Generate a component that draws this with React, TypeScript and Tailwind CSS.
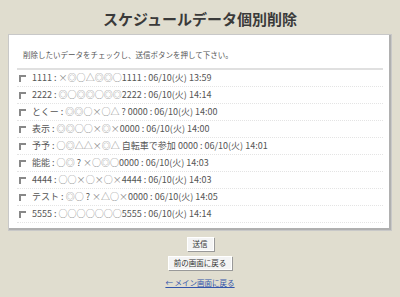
import React from "react";

const rows = [
  "1111 : ×◎○△◎◎○1111 : 06/10(火) 13:59",
  "2222 : ◎○◎◎○◎◎2222 : 06/10(火) 14:14",
  "とくー : ◎◎○×○△ ? 0000 : 06/10(火) 14:00",
  "表示 : ◎◎○○×◎×0000 : 06/10(火) 14:00",
  "予予 : ○◎△△×◎△ 自転車で参加 0000 : 06/10(火) 14:01",
  "能能 : ○◎ ? ×○◎○0000 : 06/10(火) 14:03",
  "4444 : ○○×○×○×4444 : 06/10(火) 14:03",
  "テスト : ◎○ ? ×△○×0000 : 06/10(火) 14:05",
  "5555 : ○○○○○○○5555 : 06/10(火) 14:14",
];

const SYM = "◎○△×";

function Row({ text }: { text: string }) {
  return (
    <span>
      {Array.from(text).map((c, i) =>
        SYM.includes(c) ? (
          <span key={i} className="text-[#8a8a8a]">
            {c}
          </span>
        ) : (
          <React.Fragment key={i}>{c}</React.Fragment>
        )
      )}
    </span>
  );
}

export default function App() {
  return (
    <div
      className="w-[400px] h-[297px] bg-[#e0ddcf] flex flex-col items-center overflow-hidden"
      style={{ fontFamily: '"Noto Sans CJK JP", "Noto Sans", sans-serif' }}
    >
      <h1 className="mt-[6px] h-[26px] text-[15px] leading-[26px] font-bold text-[#3a3a3a]">
        スケジュールデータ個別削除
      </h1>
      <div className="mt-[2px] w-[384px] h-[197px] bg-white border border-[#c8c8c8] shadow-[inset_-2px_-2px_0_#b0b0b0] px-[8px]">
        <p className="mt-[14px] pl-[6px] text-[7.5px] leading-[12px] text-[#555]">
          削除したいデータをチェックし、送信ボタンを押して下さい。
        </p>
        <div className="mt-[7px] border-t-2 border-[#e0e0e0] w-[366px]">
          {rows.map((r, i) => (
            <div
              key={i}
              className="h-[17px] flex items-center border-b border-dotted border-[#e4e4e4] pl-[2px] text-[9px] text-[#555] whitespace-nowrap"
            >
              <span className="w-[7px] h-[7px] border-l-2 border-t-2 border-[#888] mr-[6px] mt-[1px] shrink-0" />
              <Row text={r} />
            </div>
          ))}
        </div>
      </div>
      <button className="mt-[6px] h-[14px] px-[5px] bg-[#f4f4f4] border border-[#fff] shadow-[1px_1px_0_#999] text-[7.5px] leading-[12px] text-[#333]">
        送信
      </button>
      <button className="mt-[5px] h-[14px] px-[5px] bg-[#f4f4f4] border border-[#fff] shadow-[1px_1px_0_#999] text-[7.5px] leading-[12px] text-[#333]">
        前の画面に戻る
      </button>
      <a href="#" className="mt-[7px] text-[7.5px] leading-[12px] text-[#3355aa] underline">
        ← メイン画面に戻る
      </a>
    </div>
  );
}
